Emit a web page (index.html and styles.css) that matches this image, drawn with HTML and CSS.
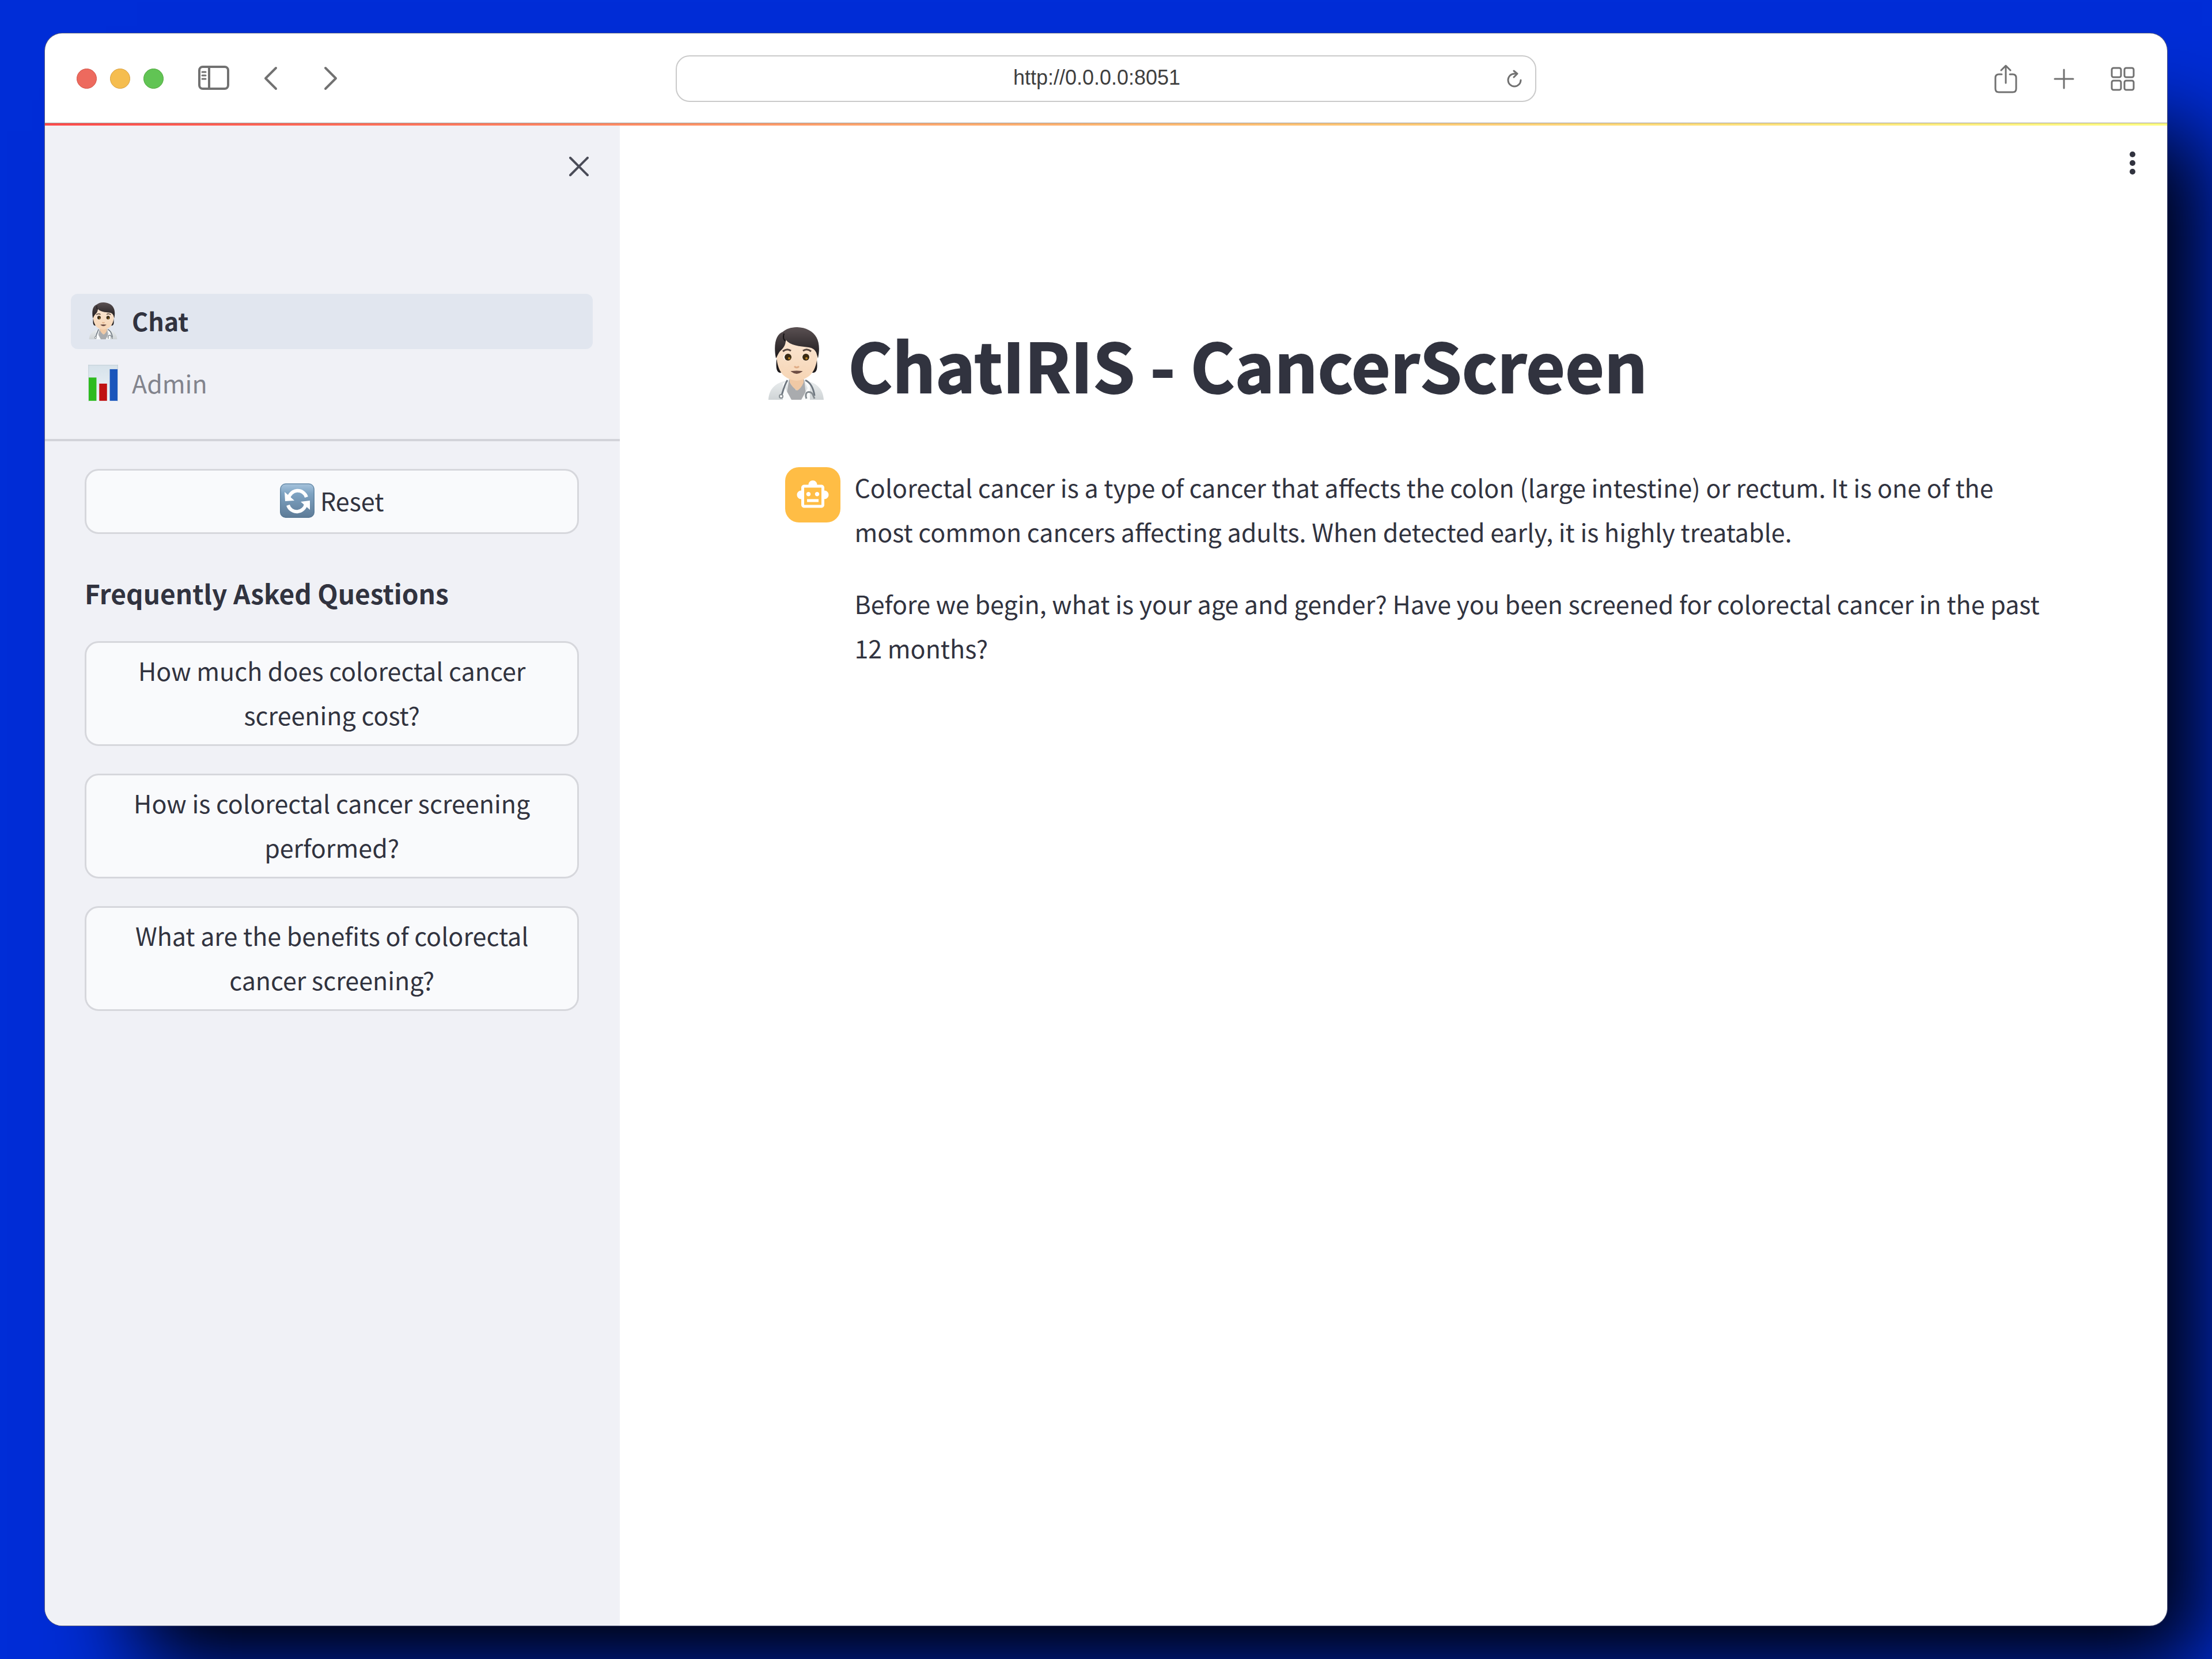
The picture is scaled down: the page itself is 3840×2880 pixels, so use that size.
FILE: index.html
```html
<!DOCTYPE html>
<html lang="en">
<head>
<meta charset="utf-8">
<title>ChatIRIS - CancerScreen</title>
<link rel="stylesheet" href="styles.css">
</head>
<body>
<svg class="sprite" aria-hidden="true">
  <defs>
    <linearGradient id="hair" x1="0" y1="0" x2="0" y2="1"><stop offset="0" stop-color="#5a5052"/><stop offset="1" stop-color="#1d1a1c"/></linearGradient>
    <linearGradient id="skin" x1="0" y1="0" x2="0" y2="1"><stop offset="0" stop-color="#fbe6d2"/><stop offset="1" stop-color="#f6d5b5"/></linearGradient>
    <linearGradient id="coat" x1="0" y1="0" x2="0" y2="1"><stop offset="0" stop-color="#eceff0"/><stop offset="1" stop-color="#cfd4d6"/></linearGradient>
    <linearGradient id="tile" x1="0" y1="0" x2="0" y2="1"><stop offset="0" stop-color="#a8c5de"/><stop offset=".3" stop-color="#7ea3c2"/><stop offset="1" stop-color="#5d7a96"/></linearGradient>
    <linearGradient id="paper" x1="0" y1="0" x2="0" y2="1"><stop offset="0" stop-color="#d6e2ea"/><stop offset="1" stop-color="#eef4f8"/></linearGradient>
    <symbol id="doctor" viewBox="0 0 96 126">
      <path d="M0 126C1 107 12 97 30 93L36 90H60L66 93C84 97 95 107 96 126Z" fill="url(#coat)"/>
      <path d="M36 90L48 110L62 90L66 126H30Z" fill="#a9abae"/>
      <path d="M36 91L29 106L40 126H25V98ZM62 91L68 106L57 126H72V98Z" fill="#fafbfb"/>
      <path d="M37 84H61V96Q57 106 50 110Q41 104 37 96Z" fill="#f0c9a5"/>
      <path d="M14 56C13 68 13 80 22 79L30 60ZM84 56C85 68 86 80 76 79L68 60Z" fill="#1f1b1d"/>
      <path d="M14 38C14 12 84 12 85 38C86 64 80 90 49 93C18 90 13 64 14 38Z" fill="url(#skin)"/>
      <path d="M13 54C8 28 14 12 25 8C35-1 55-3 70 5C86 13 91 30 86 54L83 44C80 38 76 36 70 35C54 33 38 32 30 22C30 29 28 34 22 40C17 44 16 50 13 54Z" fill="url(#hair)"/>
      <path d="M27 11Q24 21 30 24" fill="none" stroke="#161315" stroke-width="2"/>
      <path d="M25 42Q32 36 39 41M60 41Q67 36 74 42" fill="none" stroke="#57473f" stroke-width="3"/>
      <ellipse cx="33" cy="52" rx="7" ry="6" fill="#fff"/><ellipse cx="65" cy="52" rx="7" ry="6" fill="#fff"/>
      <circle cx="34" cy="52" r="6" fill="#3b2a12"/><circle cx="65" cy="52" r="6" fill="#3b2a12"/>
      <circle cx="36" cy="54" r="2" fill="#b88120"/><circle cx="66" cy="54" r="2" fill="#b88120"/>
      <path d="M45 68Q49 72 53 68" fill="none" stroke="#dfac86" stroke-width="3"/>
      <path d="M41 77Q49 76 57 77Q49 83 41 77Z" fill="#6e4e45" stroke="#6e4e45" stroke-width="2"/>
      <path d="M33 92C28 100 26 108 23 118M64 92Q77 98 80 119" fill="none" stroke="#6e7780" stroke-width="3"/>
      <circle cx="22" cy="120" r="3" fill="#fff" stroke="#858c91" stroke-width="2"/>
      <path d="M66 124C61 110 74 110 77 117L80 124" fill="none" stroke="#858c91" stroke-width="3"/>
    </symbol>
  </defs>
</svg>

<div class="window">
  <header class="toolbar">
    <div class="tools">
      <span class="lights"><i class="light red"></i><i class="light amber"></i><i class="light green"></i></span>
      <button class="tool" aria-label="Sidebar"><svg width="54" height="50" viewBox="0 0 54 50"><g fill="none" stroke="#717171" stroke-width="4"><rect x="2" y="4" width="50" height="38" rx="6"/><path d="M19 4V42"/></g><path d="M7 13H13M7 19H13M7 25H13" stroke="#717171" stroke-width="3" stroke-linecap="round"/></svg></button>
      <span class="history">
        <button class="tool" aria-label="Back"><svg width="24" height="44" viewBox="0 0 24 44"><path d="M21 3L3 21L21 39" class="stroke"/></svg></button>
        <button class="tool" aria-label="Forward"><svg width="24" height="44" viewBox="0 0 24 44"><path d="M3 3L21 21L3 39" class="stroke"/></svg></button>
      </span>
    </div>
    <div class="address">
      <input class="url" type="text" aria-label="Address" value="http://0.0.0.0:8051">
      <button class="tool" aria-label="Reload"><svg width="26" height="32" viewBox="0 0 26 32"><path d="M15 7H13A11 11 0 1 0 24 18" fill="none" stroke="#717171" stroke-width="3" stroke-linecap="round"/><path d="M12 2L18 7L12 13" fill="none" stroke="#717171" stroke-width="3" stroke-linecap="round" stroke-linejoin="round"/></svg></button>
    </div>
    <div class="tools tools-end">
      <button class="tool" aria-label="Share"><svg width="40" height="50" viewBox="0 0 40 50"><path d="M13 17H8Q2 17 2 23V42Q2 48 8 48H32Q38 48 38 42V23Q38 17 32 17H27M20 32V3M12 10L20 2L28 10" fill="none" stroke="#717171" stroke-width="3" stroke-linecap="round" stroke-linejoin="round"/></svg></button>
      <button class="tool" aria-label="New tab"><svg width="36" height="36" viewBox="0 0 36 36"><path d="M18 2V34M2 18H34" fill="none" stroke="#717171" stroke-width="3" stroke-linecap="round"/></svg></button>
      <button class="tool" aria-label="Tab overview"><svg width="42" height="42" viewBox="0 0 42 42"><g fill="none" stroke="#717171" stroke-width="3"><rect x="2" y="2" width="16" height="16" rx="3"/><rect x="24" y="2" width="16" height="16" rx="3"/><rect x="2" y="24" width="16" height="16" rx="3"/><rect x="24" y="24" width="16" height="16" rx="3"/></g></svg></button>
    </div>
  </header>
  <div class="rainbow"></div>

  <div class="page">
    <aside class="sidebar">
      <div class="sidebar-top">
        <button class="tool" aria-label="Close sidebar"><svg width="34" height="34" viewBox="0 0 34 34"><path d="M2 2L32 32M32 2L2 32" stroke="#4a4c58" stroke-width="4" stroke-linecap="round"/></svg></button>
      </div>
      <nav class="nav">
        <a class="nav-link active" href="#chat"><svg class="nav-icon" width="52" height="64"><use href="#doctor"/></svg>Chat</a>
        <a class="nav-link" href="#admin"><svg class="nav-icon" width="52" height="64" viewBox="0 0 54 66"><rect width="54" height="66" fill="url(#paper)"/><path d="M1 0V66M53 0V66M0 1H54" stroke="#c5d0d6" stroke-width="1"/><rect x="1" y="23" width="14" height="42" fill="#2dbb1e"/><rect x="20" y="34" width="14" height="31" fill="#c01313"/><rect x="39" y="8" width="14" height="57" fill="#1b56bb"/></svg>Admin</a>
      </nav>
      <div class="sidebar-body">
        <button class="btn reset"><svg width="60" height="60" viewBox="0 0 60 60"><rect width="60" height="60" rx="10" fill="url(#tile)"/><rect x="1" y="1" width="58" height="58" rx="9" fill="none" stroke="#567894" stroke-width="1"/><path d="M15 26A16 16 0 0 1 46 24M45 36A16 16 0 0 1 14 38" fill="none" stroke="#fff" stroke-width="6"/><path d="M8 15L9 31L25 30ZM52 46L52 30L36 32Z" fill="#fff"/></svg>Reset</button>
        <h2 class="faq-title">Frequently Asked Questions</h2>
        <div class="faq">
          <button class="btn">How much does colorectal cancer screening cost?</button>
          <button class="btn">How is colorectal cancer screening performed?</button>
          <button class="btn">What are the benefits of colorectal cancer screening?</button>
        </div>
      </div>
    </aside>

    <main class="main">
      <div class="main-top">
        <button class="tool" aria-label="Menu"><svg width="12" height="42" viewBox="0 0 12 42"><g fill="#31333f"><circle cx="6" cy="6" r="5"/><circle cx="6" cy="21" r="5"/><circle cx="6" cy="36" r="5"/></g></svg></button>
      </div>
      <div class="content">
        <h1 class="title"><svg width="96" height="126"><use href="#doctor"/></svg>ChatIRIS - CancerScreen</h1>
        <article class="message">
          <span class="avatar"><svg width="60" height="60" viewBox="0 0 24 24"><path fill="#fff" d="M20 9V7c0-1.1-.9-2-2-2h-3c0-1.66-1.34-3-3-3S9 3.34 9 5H6c-1.1 0-2 .9-2 2v2c-1.66 0-3 1.34-3 3s1.34 3 3 3v4c0 1.1.9 2 2 2h12c1.1 0 2-.9 2-2v-4c1.66 0 3-1.34 3-3s-1.34-3-3-3zm-2 10H6V7h12v12zm-9-6c-.83 0-1.5-.67-1.5-1.5S8.17 10 9 10s1.5.67 1.5 1.5S9.83 13 9 13zm7.5-1.5c0 .83-.67 1.5-1.5 1.5s-1.5-.67-1.5-1.5.67-1.5 1.5-1.5 1.5.67 1.5 1.5zM8 15h8v2H8v-2z"/></svg></span>
          <div class="message-text">
            <p>Colorectal cancer is a type of cancer that affects the colon (large intestine) or rectum. It is one of the most common cancers affecting adults. When detected early, it is highly treatable.</p>
            <p>Before we begin, what is your age and gender? Have you been screened for colorectal cancer in the past 12 months?</p>
          </div>
        </article>
      </div>
    </main>
  </div>
</div>
</body>
</html>
```
FILE: styles.css
```css
* { box-sizing: border-box; }

body {
  margin: 0;
  min-height: 100vh;
  padding: 58px 78px;
  display: flex;
  overflow: hidden;
  background: #002dd7;
  color: #31333f;
  font-family: "Noto Sans CJK SC", "Noto Sans", sans-serif;
  font-size: 43px;
  line-height: 77px;
}

h1, h2, p { margin: 0; }
svg { display: block; flex: none; }
.sprite { position: absolute; width: 0; height: 0; }

.window {
  flex: 1;
  display: flex;
  flex-direction: column;
  overflow: hidden;
  border-radius: 30px;
  background: #fff;
  box-shadow: 0 0 0 1px #5a6180, 110px 120px 150px -50px #000;
}

/* Browser toolbar */
.toolbar {
  display: grid;
  grid-template-columns: 1fr minmax(0, 1494px) 1fr;
  align-items: center;
  height: 155px;
  padding: 2px 56px 0 55px;
}
.tools { display: flex; align-items: center; gap: 60px; }
.tools-end { justify-content: flex-end; gap: 63px; }
.lights { display: flex; gap: 23px; }
.light { width: 35px; height: 35px; border-radius: 50%; border: 1px solid; }
.red { background: #ed6a5e; border-color: #d35549; }
.amber { background: #f5bd4f; border-color: #d8a040; }
.green { background: #61c454; border-color: #51a73e; }
.history { display: flex; gap: 80px; }
.tool { padding: 0; border: 0; background: none; cursor: pointer; }
.stroke { fill: none; stroke: #717171; stroke-width: 4; stroke-linecap: round; stroke-linejoin: round; }

.address {
  display: flex;
  align-items: center;
  height: 81px;
  padding: 0 23px 0 18px;
  border: 2px solid #cacaca;
  border-radius: 24px;
}
.url {
  flex: 1;
  min-width: 0;
  padding: 0 0 3px;
  border: 0;
  outline: 0;
  background: none;
  color: #3f3f3f;
  font: 36px "Liberation Sans", Arial, sans-serif;
  text-align: center;
}

.rainbow {
  height: 5px;
  border-top: 1px solid #9a9a9a;
  background: linear-gradient(90deg, #ff4b4b, #ffa36c 38%, #fffd80);
}

.page { flex: 1; display: flex; }

/* Sidebar */
.sidebar { flex: none; width: 26vw; background: #f0f1f6; }
.sidebar-top {
  display: flex;
  align-items: center;
  justify-content: flex-end;
  height: 142px;
  padding-right: 54px;
}
.nav {
  display: flex;
  flex-direction: column;
  gap: 12px;
  padding: 150px 47px 48px 45px;
  border-bottom: 4px solid #d2d3d9;
}
.nav-link {
  display: flex;
  align-items: center;
  gap: 24px;
  height: 96px;
  padding: 0 30px 3px;
  border-radius: 12px;
  color: #82848d;
  text-decoration: none;
}
.active { background: #e1e6ef; color: #31333f; font-weight: 700; }
.sidebar-body { padding: 48px 71px 48px 69px; }

.btn {
  display: flex;
  align-items: center;
  justify-content: center;
  width: 100%;
  min-height: 182px;
  padding: 0 40px 4px;
  border: 3px solid #d6d7dc;
  border-radius: 24px;
  background: #f9fafc;
  color: inherit;
  font: inherit;
  text-align: center;
  cursor: pointer;
}
.reset { min-height: 113px; gap: 10px; }
.faq-title { padding: 73px 0 55px; font-size: 46px; line-height: 58px; }
.faq { display: flex; flex-direction: column; gap: 48px; }

/* Chat */
.main { flex: 1; }
.main-top {
  display: flex;
  align-items: center;
  justify-content: flex-end;
  height: 130px;
  padding-right: 54px;
}
.content { padding: 211px 210px 60px 258px; }
.title {
  display: flex;
  align-items: center;
  gap: 42px;
  font-size: 117px;
  line-height: 144px;
  -webkit-text-stroke: 2px currentColor;
}
.message { display: flex; gap: 24px; padding: 104px 0 0 29px; }
.avatar {
  flex: none;
  display: flex;
  align-items: center;
  justify-content: center;
  width: 96px;
  height: 96px;
  margin-top: 4px;
  border-radius: 24px;
  background: #ffbd45;
}
.message-text { display: flex; flex-direction: column; gap: 48px; }
```
